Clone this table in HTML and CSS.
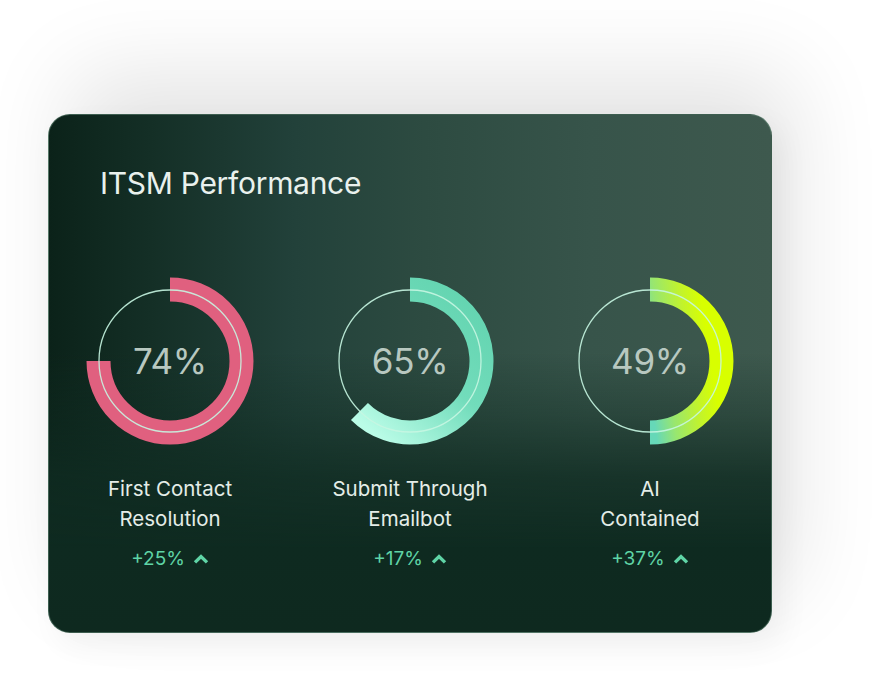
FILE: index.html
```html
<!DOCTYPE html>
<html lang="en">
<head>
<meta charset="utf-8">
<title>ITSM Performance</title>
<link rel="stylesheet" href="styles.css">
</head>
<body>
<div class="page">
  <section class="card">
    <h1 class="title">ITSM Performance</h1>
    <div class="metrics">
      <div class="metric">
        <div class="donut">
          <svg class="ring" width="170" height="170" viewBox="0 0 170 170">
            <path d="M85 13.5 A71.5 71.5 0 1 1 13.5 85" fill="none" stroke="#e0607f" stroke-width="24"/>
            <circle cx="85" cy="85" r="71" fill="none" stroke="#c6f6e2" stroke-opacity="0.9" stroke-width="1.3"/>
          </svg>
          <span class="value">74%</span>
        </div>
        <div class="label">First Contact<br>Resolution</div>
        <div class="delta"><span>+25%</span><svg class="chev" width="16" height="10" viewBox="0 0 16 10"><polyline points="2,8.4 8,2.6 14,8.4" fill="none" stroke="#5fd4a6" stroke-width="3.4"/></svg></div>
      </div>
      <div class="metric">
        <div class="donut">
          <svg class="ring" width="170" height="170" viewBox="0 0 170 170">
            <defs>
              <linearGradient id="g2" gradientUnits="userSpaceOnUse" x1="150" y1="20" x2="40" y2="150">
                <stop offset="0" stop-color="#63d4b0"/>
                <stop offset="0.5" stop-color="#72dcbb"/>
                <stop offset="1" stop-color="#bafce7"/>
              </linearGradient>
            </defs>
            <path d="M85 13.5 A71.5 71.5 0 1 1 34.44 135.56" fill="none" stroke="url(#g2)" stroke-width="24"/>
            <circle cx="85" cy="85" r="71" fill="none" stroke="#c6f6e2" stroke-opacity="0.9" stroke-width="1.3"/>
          </svg>
          <span class="value">65%</span>
        </div>
        <div class="label">Submit Through<br>Emailbot</div>
        <div class="delta"><span>+17%</span><svg class="chev" width="16" height="10" viewBox="0 0 16 10"><polyline points="2,8.4 8,2.6 14,8.4" fill="none" stroke="#5fd4a6" stroke-width="3.4"/></svg></div>
      </div>
      <div class="metric">
        <div class="donut">
          <svg class="ring" width="170" height="170" viewBox="0 0 170 170">
            <defs>
              <linearGradient id="g3" gradientUnits="userSpaceOnUse" x1="85" y1="120" x2="150" y2="110">
                <stop offset="0" stop-color="#66d8b8"/>
                <stop offset="0.3" stop-color="#98e670"/>
                <stop offset="0.7" stop-color="#c2f32c"/>
                <stop offset="1" stop-color="#d8ff00"/>
              </linearGradient>
            </defs>
            <path d="M85 13.5 A71.5 71.5 0 0 1 85 156.5" fill="none" stroke="url(#g3)" stroke-width="24"/>
            <circle cx="85" cy="85" r="71" fill="none" stroke="#c6f6e2" stroke-opacity="0.9" stroke-width="1.3"/>
          </svg>
          <span class="value">49%</span>
        </div>
        <div class="label">AI<br>Contained</div>
        <div class="delta"><span>+37%</span><svg class="chev" width="16" height="10" viewBox="0 0 16 10"><polyline points="2,8.4 8,2.6 14,8.4" fill="none" stroke="#5fd4a6" stroke-width="3.4"/></svg></div>
      </div>
    </div>
  </section>
</div>
</body>
</html>
```

FILE: styles.css
```css
* { box-sizing: border-box; }

html, body {
  margin: 0;
  padding: 0;
  background: #ffffff;
}

body {
  font-family: Inter, "Noto Sans", "Liberation Sans", sans-serif;
  width: 883px;
  height: 680px;
  overflow: hidden;
}

.page {
  padding: 114px 0 0 48px;
}

.card {
  width: 724px;
  height: 519px;
  border: 1px solid rgba(120, 160, 140, 0.45);
  border-radius: 22px;
  padding: 50px 0 0 0;
  background:
    linear-gradient(180deg, rgba(15, 43, 33, 0) 0%, rgba(15, 43, 33, 0) 46%, rgba(15, 43, 33, 0.35) 58%, rgba(15, 43, 33, 0.8) 70%, #0e2a20 84%, #0e291f 100%),
    linear-gradient(90deg, #0b2219 0%, #142f26 14%, #22413a 34%, #2d4b41 52%, #37544a 75%, #3e594e 100%);
  box-shadow: 22px -40px 90px rgba(0, 0, 0, 0.11), 10px 12px 30px rgba(0, 0, 0, 0.05);
}

.title {
  margin: 0;
  padding-left: 51px;
  font-size: 30px;
  line-height: 36px;
  font-weight: 400;
  color: #e9f1ed;
  letter-spacing: -0.3px;
}

.metrics {
  margin-top: 75px;
  display: grid;
  grid-template-columns: repeat(3, 240px);
  justify-content: center;
}

.metric {
  display: flex;
  flex-direction: column;
  align-items: center;
}

.donut {
  display: grid;
  width: 170px;
  height: 170px;
}

.donut > * {
  grid-area: 1 / 1;
}

.ring {
  display: block;
}

.value {
  align-self: center;
  justify-self: center;
  font-size: 35px;
  line-height: 40px;
  font-weight: 400;
  color: #b8c8c0;
  letter-spacing: -0.3px;
}

.label {
  margin-top: 28px;
  font-size: 20.5px;
  line-height: 30px;
  text-align: center;
  color: #e4ede8;
}

.delta {
  margin-top: 13px;
  display: flex;
  align-items: center;
  gap: 8px;
  font-size: 19px;
  line-height: 24px;
  color: #5fd4a6;
}

.chev {
  display: block;
}
```
